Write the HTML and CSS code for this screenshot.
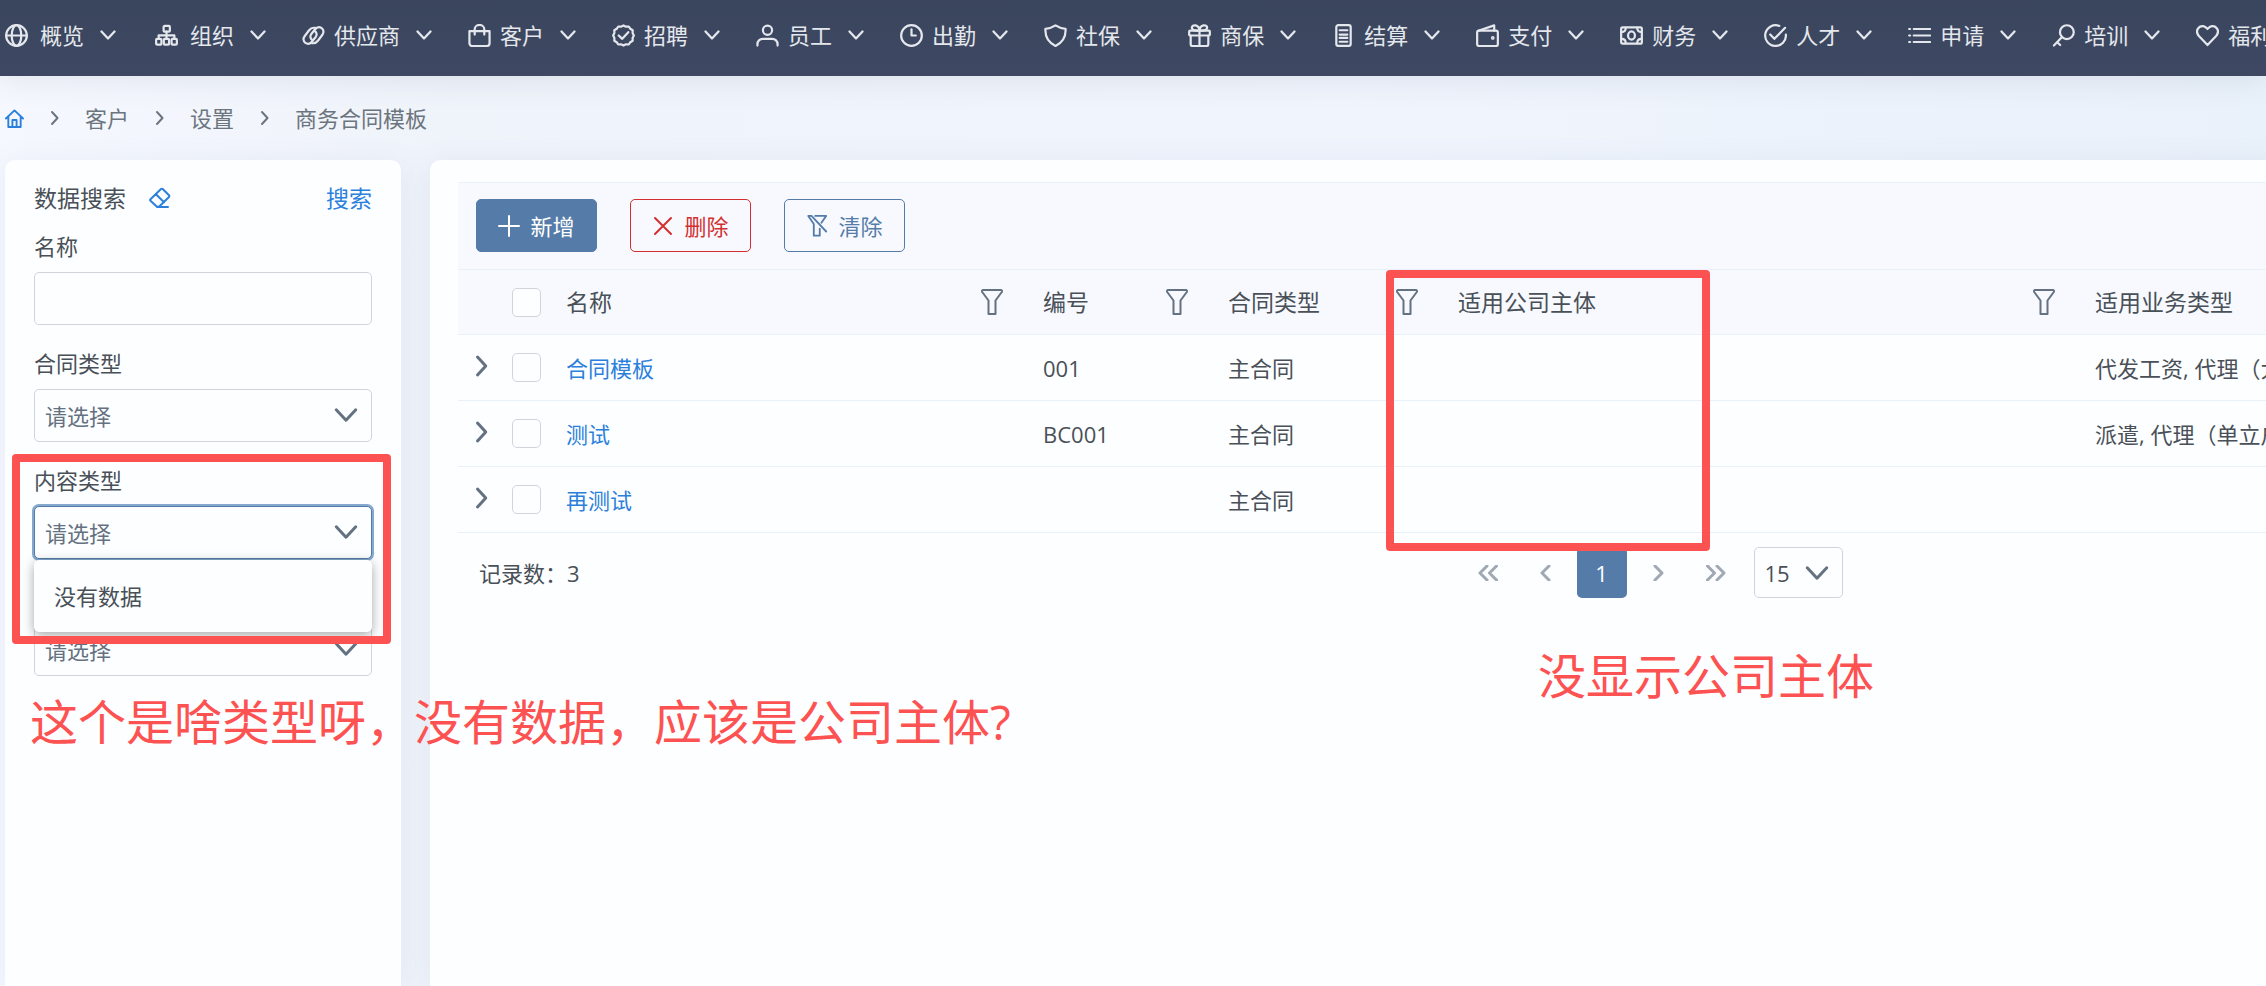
FILE: index.html
```html
<!DOCTYPE html>
<html lang="zh-CN">
<head>
    <meta charset="UTF-8">
    <meta name="viewport" content="width=device-width, initial-scale=1.0">
    <title>商务合同模板</title>
    <link rel="stylesheet" href="styles.css">
</head>
<body>
    <!-- Icon sprite -->
    <svg class="sprite" aria-hidden="true">
        <symbol id="i-down" viewBox="0 0 16 16"><path d="M1.5 4.5L8 11.5l6.500-7"/></symbol>
        <symbol id="i-right" viewBox="0 0 16 16"><path d="M5 2l5.500 6L5 14"/></symbol>
        <symbol id="i-globe" viewBox="0 0 24 24"><circle cx="12" cy="12" r="10.800"/><ellipse cx="12" cy="12" rx="5" ry="10.800"/><path d="M1.200 12h21.600"/></symbol>
        <symbol id="i-sitemap" viewBox="0 0 24 24"><rect x="9" y="2" width="6.500" height="6" rx="1"/><rect x="1.200" y="15.500" width="5.500" height="6" rx="1"/><rect x="9.200" y="15.500" width="5.500" height="6" rx="1"/><rect x="17.300" y="15.500" width="5.500" height="6" rx="1"/><path d="M12 8v7.500M3.800 15.500v-3.700h16.400v3.700"/></symbol>
        <symbol id="i-link" viewBox="0 0 24 24"><path d="M10.500 16.500c-2-1.500-2.300-4-.8-6l4-5c2-2.400 4.500-2.700 6.800-1.200 2.300 1.700 2.500 4.700.8 6.900l-4.500 6c-1.800 2.300-4.600 3.200-6.500 2.700"/><path d="M13.500 7.500c2 1.500 2.300 4 .8 6l-4 5c-2 2.400-4.500 2.700-6.800 1.200-2.300-1.700-2.500-4.700-.8-6.900l4.500-6c1.800-2.300 4.600-3.200 6.500-2.700"/></symbol>
        <symbol id="i-bag" viewBox="0 0 24 24"><path d="M1.500 7.500h21v12.500a3 3 0 0 1-3 3h-15a3 3 0 0 1-3-3zM7 11V5.500a5 4.500 0 0 1 10 0V11"/></symbol>
        <symbol id="i-verified" viewBox="0 0 24 24"><path d="M12 1.500l2.600 1.300 2.900-.2 1.600 2.400 2.500 1.500-.1 2.900L22.800 12l-1.300 2.600.1 2.900-2.500 1.500-1.600 2.400-2.900-.2L12 22.500l-2.600-1.300-2.900.2L4.900 19l-2.500-1.500.1-2.900L1.200 12l1.300-2.600-.1-2.900L4.900 5l1.600-2.400 2.900.2z"/><path d="M7 12l3.700 3.500L17 8.500"/></symbol>
        <symbol id="i-user" viewBox="0 0 24 24"><circle cx="12" cy="6.500" r="4.800"/><path d="M1.500 22.500v-1.500a5.500 5.500 0 0 1 5.500-5.500h10a5.500 5.500 0 0 1 5.500 5.500v1.500"/></symbol>
        <symbol id="i-clock" viewBox="0 0 24 24"><circle cx="12" cy="12" r="10.800"/><path d="M12 5.500V12h4.500"/></symbol>
        <symbol id="i-shield" viewBox="0 0 24 24"><path d="M12 1.500c3.500 2.300 6.800 3.300 10.500 3.500.5 8-2.500 14-10.500 18C4 19 1 13 1.500 5c3.700-.2 7-1.200 10.500-3.500z"/></symbol>
        <symbol id="i-gift" viewBox="0 0 24 24"><rect x="1.200" y="7" width="21.600" height="5" rx="1"/><path d="M2.800 12v9a2 2 0 0 0 2 2h14.400a2 2 0 0 0 2-2v-9M12 7v16M12 7C8 7 4 6.500 4 3.800 4 .3 11.500 0 12 7c.5-7 8-6.700 8-3.200C20 6.500 16 7 12 7"/></symbol>
        <symbol id="i-calc" viewBox="0 0 24 24"><rect x="4.500" y="1.200" width="15" height="21.600" rx="2"/><path d="M8 6.500h8M8 11h2m1 0h2m1 0h2M8 14.500h2m1 0h2m1 0h2M8 18.500h5m1 0h2"/></symbol>
        <symbol id="i-wallet" viewBox="0 0 24 24"><rect x="1.200" y="7" width="21.600" height="16" rx="2"/><path d="M2.500 7L19 1.400V7"/><circle cx="17.500" cy="14.500" r=".8"/></symbol>
        <symbol id="i-money" viewBox="0 0 24 24"><rect x="1.200" y="3.500" width="21.600" height="17" rx="1.500"/><ellipse cx="12" cy="12" rx="3.600" ry="4.200"/><path d="M1.500 8.500c3 0 4.500-1.800 4.500-4.500M22.500 8.500c-3 0-4.500-1.800-4.500-4.500M1.500 15.500c3 0 4.500 1.800 4.500 4.500M22.500 15.500c-3 0-4.500 1.800-4.500 4.500"/></symbol>
        <symbol id="i-check" viewBox="0 0 24 24"><path d="M16 2A10.800 10.800 0 1 0 22.800 11M6.500 11l4.300 4.500L22 4"/></symbol>
        <symbol id="i-list" viewBox="0 0 24 24"><path d="M6 5.200h17M6 12h17M6 18.800h17M1.200 5.200h1M1.200 12h1M1.200 18.800h1"/></symbol>
        <symbol id="i-key" viewBox="0 0 24 24"><circle cx="15.500" cy="8.500" r="7.200"/><path d="M10.500 13.500L2 22.500M5.500 19l3 3"/></symbol>
        <symbol id="i-heart" viewBox="0 0 24 24"><path d="M12 22L3 12.500C-1.500 7 3 1.800 7.500 2.200 10 2.500 11 4 12 5.200c1-1.200 2-2.700 4.500-3C21 1.800 25.500 7 21 12.500z"/></symbol>
        <symbol id="i-home" viewBox="0 0 20 20"><path d="M1 10l9-8.500L19 10M3.500 8v11h13V8M7.800 19v-7.500h4.400V19"/></symbol>
        <symbol id="i-eraser" viewBox="0 0 22 22"><path d="M1.500 12.200L12 2a1.200 1.200 0 0 1 1.700 0l6.300 6.300a1.200 1.200 0 0 1 0 1.700L10 19.800H8l-6.500-6a1.200 1.200 0 0 1 0-1.600zM7 7.200l8 8M8 20h11"/></symbol>
        <symbol id="i-plus" viewBox="0 0 22 22"><path d="M11 1v20M1 11h20"/></symbol>
        <symbol id="i-times" viewBox="0 0 22 22"><path d="M3 3l16 16M19 3L3 19"/></symbol>
        <symbol id="i-funnel" viewBox="0 0 22 26"><path d="M2 1h18q1.500.5.800 2l-6.300 8.500V25h-7V11.500L1.200 3q-.7-1.500.8-2z"/></symbol>
        <symbol id="i-funnel-off" viewBox="0 0 22 24"><path d="M5 1H1.500l6 8.800V22.500h6.500V15M9 1h12l-5.200 7.500M5 1l16 17"/></symbol>
        <symbol id="i-first" viewBox="0 0 20 16"><path d="M9 1L2 8l7 7M18.500 1l-7 7 7 7"/></symbol>
        <symbol id="i-prev" viewBox="0 0 20 16"><path d="M14 1L7 8l7 7"/></symbol>
        <symbol id="i-next" viewBox="0 0 20 16"><path d="M6 1l7 7-7 7"/></symbol>
        <symbol id="i-last" viewBox="0 0 20 16"><path d="M1.500 1l7 7-7 7M11 1l7 7-7 7"/></symbol>
    </svg>

    <!-- Top menu -->
    <nav class="topbar">
        <a class="menu-item wide" href="#"><svg><use href="#i-globe"/></svg><span>概览</span><svg class="caret"><use href="#i-down"/></svg></a>
        <a class="menu-item wide" href="#"><svg><use href="#i-sitemap"/></svg><span>组织</span><svg class="caret"><use href="#i-down"/></svg></a>
        <a class="menu-item" href="#"><svg><use href="#i-link"/></svg><span>供应商</span><svg class="caret"><use href="#i-down"/></svg></a>
        <a class="menu-item" href="#"><svg><use href="#i-bag"/></svg><span>客户</span><svg class="caret"><use href="#i-down"/></svg></a>
        <a class="menu-item" href="#"><svg><use href="#i-verified"/></svg><span>招聘</span><svg class="caret"><use href="#i-down"/></svg></a>
        <a class="menu-item" href="#"><svg><use href="#i-user"/></svg><span>员工</span><svg class="caret"><use href="#i-down"/></svg></a>
        <a class="menu-item" href="#"><svg><use href="#i-clock"/></svg><span>出勤</span><svg class="caret"><use href="#i-down"/></svg></a>
        <a class="menu-item" href="#"><svg><use href="#i-shield"/></svg><span>社保</span><svg class="caret"><use href="#i-down"/></svg></a>
        <a class="menu-item" href="#"><svg><use href="#i-gift"/></svg><span>商保</span><svg class="caret"><use href="#i-down"/></svg></a>
        <a class="menu-item" href="#"><svg><use href="#i-calc"/></svg><span>结算</span><svg class="caret"><use href="#i-down"/></svg></a>
        <a class="menu-item" href="#"><svg><use href="#i-wallet"/></svg><span>支付</span><svg class="caret"><use href="#i-down"/></svg></a>
        <a class="menu-item" href="#"><svg><use href="#i-money"/></svg><span>财务</span><svg class="caret"><use href="#i-down"/></svg></a>
        <a class="menu-item" href="#"><svg><use href="#i-check"/></svg><span>人才</span><svg class="caret"><use href="#i-down"/></svg></a>
        <a class="menu-item" href="#"><svg><use href="#i-list"/></svg><span>申请</span><svg class="caret"><use href="#i-down"/></svg></a>
        <a class="menu-item" href="#"><svg><use href="#i-key"/></svg><span>培训</span><svg class="caret"><use href="#i-down"/></svg></a>
        <a class="menu-item" href="#"><svg><use href="#i-heart"/></svg><span>福利</span><svg class="caret"><use href="#i-down"/></svg></a>
    </nav>

    <!-- Breadcrumb Navigation -->
    <ul class="breadcrumb">
        <li><a class="home" href="#" aria-label="首页"><svg><use href="#i-home"/></svg></a></li>
        <li><svg class="sep"><use href="#i-right"/></svg><a href="#">客户</a></li>
        <li><svg class="sep"><use href="#i-right"/></svg><a href="#">设置</a></li>
        <li><svg class="sep"><use href="#i-right"/></svg><span>商务合同模板</span></li>
    </ul>

    <div class="layout">
        <!-- Search panel -->
        <form class="card search-panel">
            <div class="search-head">
                <h2>数据搜索</h2>
                <button type="button" class="plain-btn" aria-label="清空"><svg><use href="#i-eraser"/></svg></button>
                <button type="button" class="plain-btn search-btn">搜索</button>
            </div>
            <div class="field">
                <label for="name">名称</label>
                <input type="text" id="name" class="control">
            </div>
            <div class="field">
                <label for="contract-type">合同类型</label>
                <div class="select-box">
                    <select id="contract-type" class="control"><option>请选择</option></select>
                    <svg><use href="#i-down"/></svg>
                </div>
            </div>
            <div class="field">
                <label for="content-type">内容类型</label>
                <div class="select-box open">
                    <select id="content-type" class="control"><option>请选择</option></select>
                    <svg><use href="#i-down"/></svg>
                    <div class="select-menu">没有数据</div>
                </div>
            </div>
            <div class="field no-label">
                <div class="select-box">
                    <select id="business-type" class="control" aria-label="业务类型"><option>请选择</option></select>
                    <svg><use href="#i-down"/></svg>
                </div>
            </div>
        </form>

        <!-- Template list -->
        <main class="card list-panel">
            <div class="toolbar">
                <button type="button" class="btn btn-primary"><svg><use href="#i-plus"/></svg>新增</button>
                <button type="button" class="btn btn-danger"><svg><use href="#i-times"/></svg>删除</button>
                <button type="button" class="btn btn-outline"><svg><use href="#i-funnel-off"/></svg>清除</button>
            </div>
            <table>
                <colgroup>
                    <col class="col-expand">
                    <col class="col-check">
                    <col class="col-name">
                    <col class="col-code">
                    <col class="col-type">
                    <col class="col-company">
                    <col>
                </colgroup>
                <thead>
                    <tr>
                        <th></th>
                        <th><input type="checkbox" aria-label="全选"></th>
                        <th><div class="th-inner">名称<button type="button" class="plain-btn filter" aria-label="筛选名称"><svg><use href="#i-funnel"/></svg></button></div></th>
                        <th><div class="th-inner">编号<button type="button" class="plain-btn filter" aria-label="筛选编号"><svg><use href="#i-funnel"/></svg></button></div></th>
                        <th><div class="th-inner">合同类型<button type="button" class="plain-btn filter" aria-label="筛选合同类型"><svg><use href="#i-funnel"/></svg></button></div></th>
                        <th><div class="th-inner">适用公司主体<button type="button" class="plain-btn filter" aria-label="筛选公司主体"><svg><use href="#i-funnel"/></svg></button></div></th>
                        <th>适用业务类型</th>
                    </tr>
                </thead>
                <tbody>
                    <tr>
                        <td><button type="button" class="plain-btn expand" aria-label="展开"><svg><use href="#i-right"/></svg></button></td>
                        <td><input type="checkbox" aria-label="选择合同模板"></td>
                        <td><a href="#">合同模板</a></td>
                        <td>001</td>
                        <td>主合同</td>
                        <td></td>
                        <td>代发工资, 代理（大库）</td>
                    </tr>
                    <tr>
                        <td><button type="button" class="plain-btn expand" aria-label="展开"><svg><use href="#i-right"/></svg></button></td>
                        <td><input type="checkbox" aria-label="选择测试"></td>
                        <td><a href="#">测试</a></td>
                        <td>BC001</td>
                        <td>主合同</td>
                        <td></td>
                        <td>派遣, 代理（单立户）</td>
                    </tr>
                    <tr>
                        <td><button type="button" class="plain-btn expand" aria-label="展开"><svg><use href="#i-right"/></svg></button></td>
                        <td><input type="checkbox" aria-label="选择再测试"></td>
                        <td><a href="#">再测试</a></td>
                        <td></td>
                        <td>主合同</td>
                        <td></td>
                        <td></td>
                    </tr>
                </tbody>
            </table>
            <div class="paginator">
                <span class="total">记录数：3</span>
                <button type="button" class="page-btn" aria-label="首页"><svg><use href="#i-first"/></svg></button>
                <button type="button" class="page-btn" aria-label="上一页"><svg><use href="#i-prev"/></svg></button>
                <button type="button" class="page-btn active">1</button>
                <button type="button" class="page-btn" aria-label="下一页"><svg><use href="#i-next"/></svg></button>
                <button type="button" class="page-btn" aria-label="末页"><svg><use href="#i-last"/></svg></button>
                <div class="select-box page-size">
                    <select class="control" aria-label="每页条数"><option>15</option></select>
                    <svg><use href="#i-down"/></svg>
                </div>
            </div>
        </main>
    </div>

    <!-- Review marks laid over the page -->
    <div class="mark mark-filter"></div>
    <div class="mark mark-column"></div>
    <p class="note note-filter">这个是啥类型呀，没有数据，应该是公司主体?</p>
    <p class="note note-column">没显示公司主体</p>
</body>
</html>
```
FILE: styles.css
```css
* {
    box-sizing: border-box;
}

body {
    position: relative;
    display: flex;
    flex-direction: column;
    min-height: 100vh;
    margin: 0;
    overflow: hidden;
    font-family: "Open Sans", "Noto Sans CJK SC", sans-serif;
    font-size: 22px;
    line-height: 32px;
    color: #495057;
    background: linear-gradient(90deg, #f5f8fe 0, #eff3fa 20%, #f0f4fd 60%, #e9f1fa 100%);
}

button, input, select {
    font: inherit;
    color: inherit;
    margin: 0;
}

a {
    color: #2b80dc;
    text-decoration: none;
}

svg {
    flex: none;
    width: 22px;
    height: 22px;
    fill: none;
    stroke: currentColor;
    stroke-width: 2;
    stroke-linecap: round;
    stroke-linejoin: round;
}

.sprite {
    position: absolute;
    width: 0;
    height: 0;
}

.plain-btn {
    display: flex;
    padding: 0;
    border: none;
    background: none;
    cursor: pointer;
}

/* Top menu */
.topbar {
    display: flex;
    gap: 36px;
    height: 76px;
    padding: 0 2px 6px;
    overflow: hidden;
    background: linear-gradient(#3a455e, #3e4862);
    box-shadow: 0 4px 30px rgba(60, 70, 90, 0.1);
}

.menu-item {
    display: flex;
    flex: none;
    align-items: center;
    gap: 9px;
    color: #e4e7ec;
}

.menu-item svg {
    width: 23px;
    height: 23px;
    stroke-width: 2.3;
}

.menu-item.wide svg:first-child {
    margin: 0 3px;
}

.menu-item .caret {
    width: 16px;
    height: 16px;
    margin-left: 7px;
}

/* Breadcrumb */
.breadcrumb {
    display: flex;
    align-items: center;
    height: 84px;
    margin: 0;
    padding: 0 5px;
    list-style: none;
    color: #6c757d;
}

.breadcrumb li {
    display: flex;
    align-items: center;
}

.breadcrumb a {
    color: inherit;
}

.breadcrumb .home {
    display: flex;
    color: #2b80dc;
}

.breadcrumb .home svg {
    width: 19px;
    height: 19px;
}

.breadcrumb .sep {
    width: 16px;
    height: 16px;
    margin: 0 22px 0 23px;
}

/* Page layout */
.layout {
    display: flex;
    flex: 1;
    gap: 29px;
    padding-left: 5px;
}

.card {
    background-color: #fdfeff;
    border-radius: 10px 10px 0 0;
    box-shadow: 0 4px 30px rgba(110, 120, 160, 0.1);
}

/* Search panel */
.search-panel {
    flex: none;
    width: 396px;
    padding: 22px 29px;
}

.search-head {
    display: flex;
    align-items: center;
    height: 32px;
    margin-bottom: 16px;
    font-size: 23px;
}

.search-head h2 {
    margin: 0 23px 0 0;
    font-size: 23px;
    font-weight: 400;
}

.search-head .plain-btn {
    color: #2b80dc;
}

.search-head .search-btn {
    margin-left: auto;
}

.field {
    display: flex;
    flex-direction: column;
    gap: 10px;
    margin-bottom: 22px;
}

.field.no-label {
    padding-top: 42px;
}

.control {
    display: block;
    width: 100%;
    height: 53px;
    padding: 0 10px;
    border: 1px solid #d1d5db;
    border-radius: 5px;
    background-color: #fdfeff;
    appearance: none;
    outline: none;
}

.select-box {
    position: relative;
    color: #647180;
}

.select-box svg {
    position: absolute;
    top: 14px;
    right: 14px;
    width: 24px;
    height: 24px;
    pointer-events: none;
}

.open .control {
    border-color: #557ca9;
    box-shadow: 0 0 0 2px #85a8cf;
}

.select-menu {
    position: absolute;
    z-index: 2;
    top: 54px;
    left: 0;
    right: 0;
    padding: 20px;
    border-radius: 5px;
    color: #495057;
    background-color: #fdfeff;
    box-shadow: 0 3px 12px rgba(0, 0, 0, 0.35);
}

/* List panel is wider than the window and runs off to the right */
.list-panel {
    flex: 1;
    min-width: 2445px;
    padding: 22px 28px;
}

.toolbar {
    display: flex;
    gap: 33px;
    padding: 16px 18px 17px;
    border-top: 1px solid #e9f1f9;
    background-color: #f7f9fe;
}

.btn {
    display: flex;
    align-items: center;
    justify-content: center;
    gap: 10px;
    width: 121px;
    height: 53px;
    padding: 0;
    border: 1px solid;
    border-radius: 5px;
    background: none;
    cursor: pointer;
}

.btn-primary {
    color: #fff;
    background-color: #557ca9;
    border-color: #557ca9;
}

.btn-danger {
    color: #d32f2f;
}

.btn-outline {
    color: #557ca9;
}

table {
    width: 100%;
    table-layout: fixed;
    border-collapse: collapse;
}

.col-expand {
    width: 38px;
}

.col-check {
    width: 54px;
}

.col-name {
    width: 477px;
}

.col-code {
    width: 185px;
}

.col-type {
    width: 230px;
}

.col-company {
    width: 637px;
}

th, td {
    height: 66px;
    padding: 0 16px;
    text-align: left;
    font-weight: 400;
    border-bottom: 1px solid #e9f1f9;
}

th {
    height: 65px;
    font-size: 23px;
    border-top: 1px solid #e9f1f9;
    background-color: #f7f9fe;
}

.th-inner {
    display: flex;
    align-items: center;
    justify-content: space-between;
}

.filter {
    margin-right: 8px;
    color: #647180;
}

.filter svg {
    height: 26px;
}

.expand {
    color: #647180;
}

.expand svg {
    width: 24px;
    height: 28px;
}

td:first-child, th:first-child {
    padding: 0 0 4px 12px;
}

input[type="checkbox"] {
    display: block;
    width: 29px;
    height: 29px;
    border: 1px solid #d1d5db;
    border-radius: 5px;
    background-color: #fdfeff;
    appearance: none;
}

/* Paginator */
.paginator {
    position: relative;
    display: flex;
    align-items: center;
    justify-content: center;
    gap: 7px;
    padding-top: 14px;
}

.total {
    position: absolute;
    left: 21px;
}

.page-btn {
    display: flex;
    align-items: center;
    justify-content: center;
    width: 50px;
    height: 51px;
    padding: 0;
    border: none;
    border-radius: 5px;
    color: #a0a8b3;
    background: none;
}

.page-btn svg {
    width: 20px;
    height: 16px;
    stroke-width: 3;
}

.page-btn.active {
    color: #fff;
    background-color: #557ca9;
}

.page-size {
    width: 89px;
    margin-left: 6px;
}

.page-size .control {
    height: 51px;
    color: #495057;
}

/* Review marks */
.mark {
    position: absolute;
    z-index: 3;
    border: 8px solid #fd5252;
    border-radius: 4px;
}

.mark-filter {
    top: 454px;
    left: 12px;
    width: 379px;
    height: 190px;
}

.mark-column {
    top: 270px;
    left: 1386px;
    width: 324px;
    height: 281px;
}

.note {
    position: absolute;
    z-index: 3;
    margin: 0;
    font-size: 48px;
    line-height: 60px;
    white-space: nowrap;
    color: #fd5252;
}

.note-filter {
    top: 692px;
    left: 30px;
}

.note-column {
    top: 646px;
    left: 1538px;
}
```
